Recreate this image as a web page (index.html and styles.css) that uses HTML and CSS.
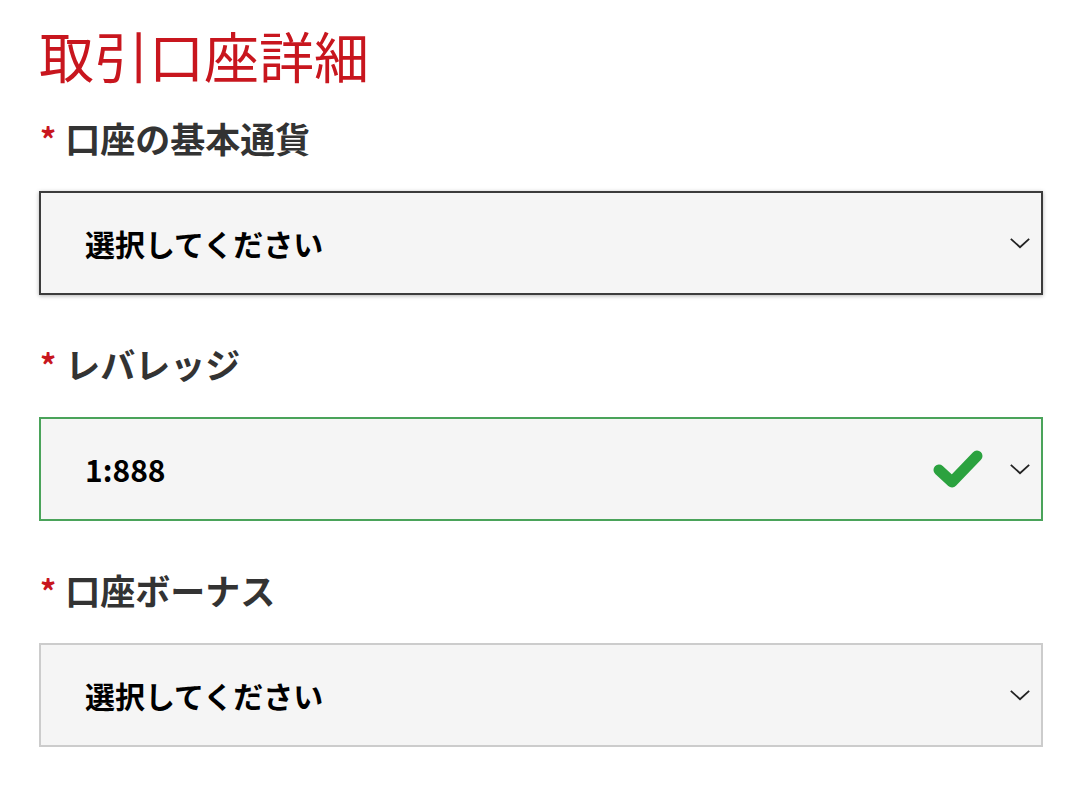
FILE: index.html
```html
<!DOCTYPE html>
<html lang="ja">
<head>
  <meta charset="UTF-8" />
  <meta name="viewport" content="width=device-width, initial-scale=1.0"/>
  <title>取引口座詳細</title>
  <link rel="stylesheet" href="styles.css">
</head>
<body>
  <div class="form-section">
    <h1 class="section-title">取引口座詳細</h1>

    <div class="field">
      <label class="field-label"><span class="req">*</span>口座の基本通貨</label>
      <div class="select-box focused">
        <span class="select-value">選択してください</span>
        <svg class="chevron" viewBox="0 0 24 14"><polyline points="2,2 12,11 22,2"/></svg>
      </div>
    </div>

    <div class="field">
      <label class="field-label"><span class="req">*</span>レバレッジ</label>
      <div class="select-box valid">
        <span class="select-value">1:888</span>
        <svg class="check" viewBox="0 0 50 38"><polyline points="6,20 19,32 44,6"/></svg>
        <svg class="chevron" viewBox="0 0 24 14"><polyline points="2,2 12,11 22,2"/></svg>
      </div>
    </div>

    <div class="field">
      <label class="field-label"><span class="req">*</span>口座ボーナス</label>
      <div class="select-box">
        <span class="select-value">選択してください</span>
        <svg class="chevron" viewBox="0 0 24 14"><polyline points="2,2 12,11 22,2"/></svg>
      </div>
    </div>
  </div>
</body>
</html>
```

FILE: styles.css
```css
body {
  font-family: 'Noto Sans CJK JP', 'Noto Sans', sans-serif;
  background-color: #fff;
  margin: 0;
  padding: 0;
}

.form-section {
  padding: 22px 35px 0 39px;
}

.section-title {
  color: #c8161e;
  font-size: 55px;
  font-weight: 400;
  line-height: 64px;
  margin: 0 0 32px 0;
}

.field {
  margin-bottom: 49px;
}

.field-label {
  display: flex;
  align-items: center;
  font-size: 35px;
  font-weight: 700;
  color: #333;
  line-height: 40px;
  margin-bottom: 33px;
}

.req {
  color: #c8161e;
  font-size: 32px;
  margin-right: 9px;
  margin-left: 1px;
}

.select-box {
  display: flex;
  align-items: center;
  height: 104px;
  box-sizing: border-box;
  background-color: #f5f5f5;
  border: 2px solid #ccc;
  padding: 0 10px 0 44px;
}

.select-box.focused {
  border-color: #3c3c3c;
  box-shadow: 0 1px 4px rgba(0,0,0,0.3);
}

.select-box.valid {
  border-color: #4aa35a;
}

.select-value {
  flex: 1;
  font-size: 30px;
  font-weight: 700;
  color: #000;
}

.check {
  width: 50px;
  height: 38px;
  margin-right: 26px;
}

.check polyline {
  fill: none;
  stroke: #2ba23f;
  stroke-width: 11;
  stroke-linecap: round;
  stroke-linejoin: round;
}

.chevron {
  width: 22px;
  height: 13px;
}

.chevron polyline {
  fill: none;
  stroke: #222;
  stroke-width: 2;
}
```
